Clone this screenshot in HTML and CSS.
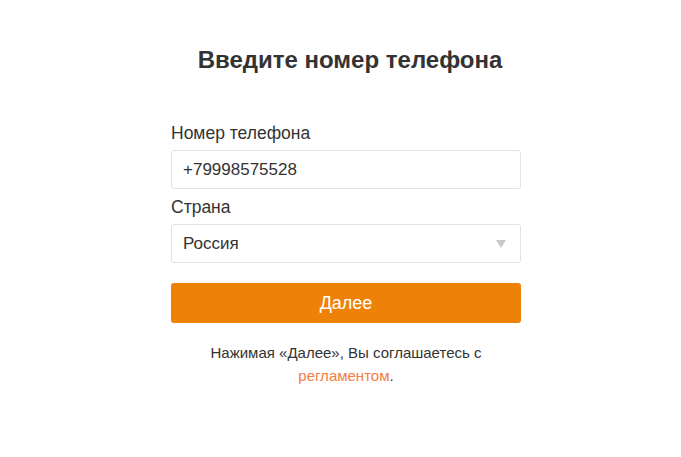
FILE: index.html
```html
<!DOCTYPE html>
<html lang="ru">
<head>
<meta charset="utf-8">
<link rel="stylesheet" href="styles.css">
</head>
<body>
<main class="page">
  <h1 class="title">Введите номер телефона</h1>
  <form class="form">
    <label class="label">Номер телефона</label>
    <div class="field">+79998575528</div>
    <label class="label label-country">Страна</label>
    <div class="field select">
      <span>Россия</span>
      <svg class="arrow" width="10" height="8" viewBox="0 0 10 8"><path d="M0 0H10L5 8Z" fill="#c8c8c8"/></svg>
    </div>
    <button type="button" class="btn">Далее</button>
    <p class="note">Нажимая «Далее», Вы соглашаетесь с<br><a class="link">регламентом</a>.</p>
  </form>
</main>
</body>
</html>
```
FILE: styles.css
```css
html, body {
  margin: 0;
  padding: 0;
  background: #fff;
}
body {
  font-family: "Liberation Sans", Arial, sans-serif;
  color: #333;
}
.page {
  display: flex;
  flex-direction: column;
  align-items: center;
  padding-top: 44px;
  padding-left: 11px;
}
.title {
  margin: 0;
  padding-left: 8px;
  font-size: 24px;
  font-weight: bold;
  line-height: 32px;
  color: #333;
}
.form {
  width: 350px;
  margin-top: 47px;
  display: flex;
  flex-direction: column;
}
.label {
  font-size: 17.5px;
  line-height: 20px;
  color: #333;
  margin-bottom: 7px;
}
.label-country {
  margin-top: 8px;
}
.field {
  box-sizing: border-box;
  height: 39px;
  border: 1px solid #e2e2e2;
  border-radius: 3px;
  padding: 0 11px;
  display: flex;
  align-items: center;
  font-size: 17px;
  color: #333;
}
.select {
  justify-content: space-between;
  padding-right: 14px;
}
.arrow {
  display: block;
}
.btn {
  margin-top: 20px;
  height: 40px;
  border: none;
  border-radius: 3px;
  background: #ee8208;
  color: #fff;
  font-family: "Liberation Sans", Arial, sans-serif;
  font-size: 18px;
  padding: 0;
}
.note {
  margin: 18px 0 0;
  text-align: center;
  font-size: 15px;
  line-height: 23px;
  color: #333;
}
.link {
  color: #f27d45;
  text-decoration: none;
}
```
